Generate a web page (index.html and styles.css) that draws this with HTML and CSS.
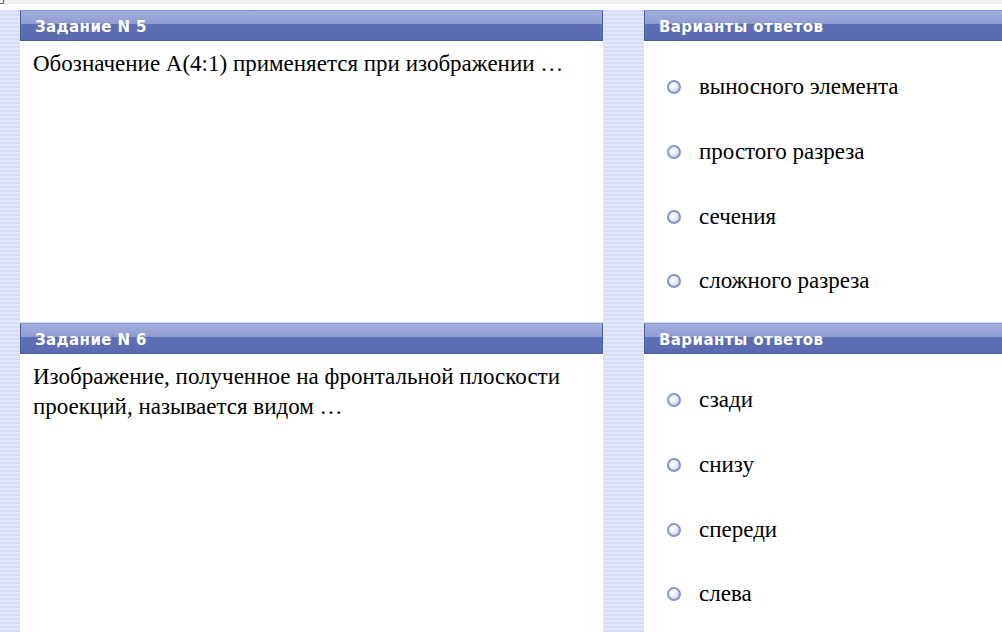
FILE: index.html
```html
<!DOCTYPE html>
<html lang="ru">
<head>
    <meta charset="UTF-8">
    <title>Тест</title>
    <link rel="stylesheet" href="styles.css">
</head>
<body>
    <div class="ruler"><span class="corner"></span></div>

    <div class="sheet">
        <div class="task">
            <div class="bar">Задание N 5</div>
            <div class="question">Обозначение А(4:1) применяется при изображении …</div>
        </div>
        <div class="answers">
            <div class="bar">Варианты ответов</div>
            <ul class="options">
                <li><span class="radio"></span>выносного элемента</li>
                <li><span class="radio"></span>простого разреза</li>
                <li><span class="radio"></span>сечения</li>
                <li><span class="radio"></span>сложного разреза</li>
            </ul>
        </div>

        <div class="task">
            <div class="bar">Задание N 6</div>
            <div class="question">Изображение, полученное на фронтальной плоскости проекций, называется видом …</div>
        </div>
        <div class="answers">
            <div class="bar">Варианты ответов</div>
            <ul class="options">
                <li><span class="radio"></span>сзади</li>
                <li><span class="radio"></span>снизу</li>
                <li><span class="radio"></span>спереди</li>
                <li><span class="radio"></span>слева</li>
            </ul>
        </div>
    </div>
</body>
</html>
```

FILE: styles.css
```css
html, body {
    margin: 0;
    height: 100%;
    overflow: hidden;
    background: #fff;
}

/* grey ruler with ticks along the top edge */
.ruler {
    position: relative;
    height: 4px;
    background-color: #efefef;
    background-image: repeating-linear-gradient(to right, transparent 0 94px, #a0a0a0 94px 95px);
    background-size: 94.4px 100%;
    margin-bottom: 6px;
}

.corner {
    position: absolute;
    left: 0;
    top: 0;
    width: 3px;
    height: 3px;
    border-right: 1px solid #666;
    border-bottom: 1px solid #666;
}

/* striped blue background, panels sit on top */
.sheet {
    display: grid;
    grid-template-columns: 583px 359px;
    grid-template-rows: 312px 320px;
    column-gap: 41px;
    row-gap: 1px;
    padding-left: 20px;
    background: repeating-linear-gradient(to bottom, #d6ddf5 0 2px, #e3e8f9 2px 4px);
}

.task, .answers {
    background: #fff;
}

.answers {
    margin-right: -40px;
}

.bar {
    height: 29px;
    line-height: 32px;
    padding-left: 14px;
    border: 1px solid #4a5e9e;
    border-top-color: #7f9bd0;
    background: linear-gradient(to bottom, #a3b0de 0, #8d9bd1 45%, #5f6fb6 46%, #5b6bb2 100%);
    color: #fff;
    font-family: "DejaVu Sans", Verdana, sans-serif;
    font-weight: bold;
    font-size: 15px;
    letter-spacing: 0.4px;
}

.question {
    padding: 8px 13px 0;
    font-family: "Liberation Serif", "Times New Roman", serif;
    font-size: 23px;
    line-height: 30px;
    color: #000;
    max-width: 545px;
}

.options {
    list-style: none;
    margin: 0;
    padding: 14px 0 0 23px;
}

.options li {
    display: flex;
    align-items: center;
    height: 64.67px;
    font-family: "Liberation Serif", "Times New Roman", serif;
    font-size: 23px;
    color: #000;
}

.radio {
    flex: none;
    width: 10px;
    height: 10px;
    margin-right: 18px;
    border: 2px solid #8696c9;
    border-radius: 50%;
    background: radial-gradient(circle at 35% 35%, #fff 0, #eef1fa 40%, #b3bfe2 100%);
}
```
